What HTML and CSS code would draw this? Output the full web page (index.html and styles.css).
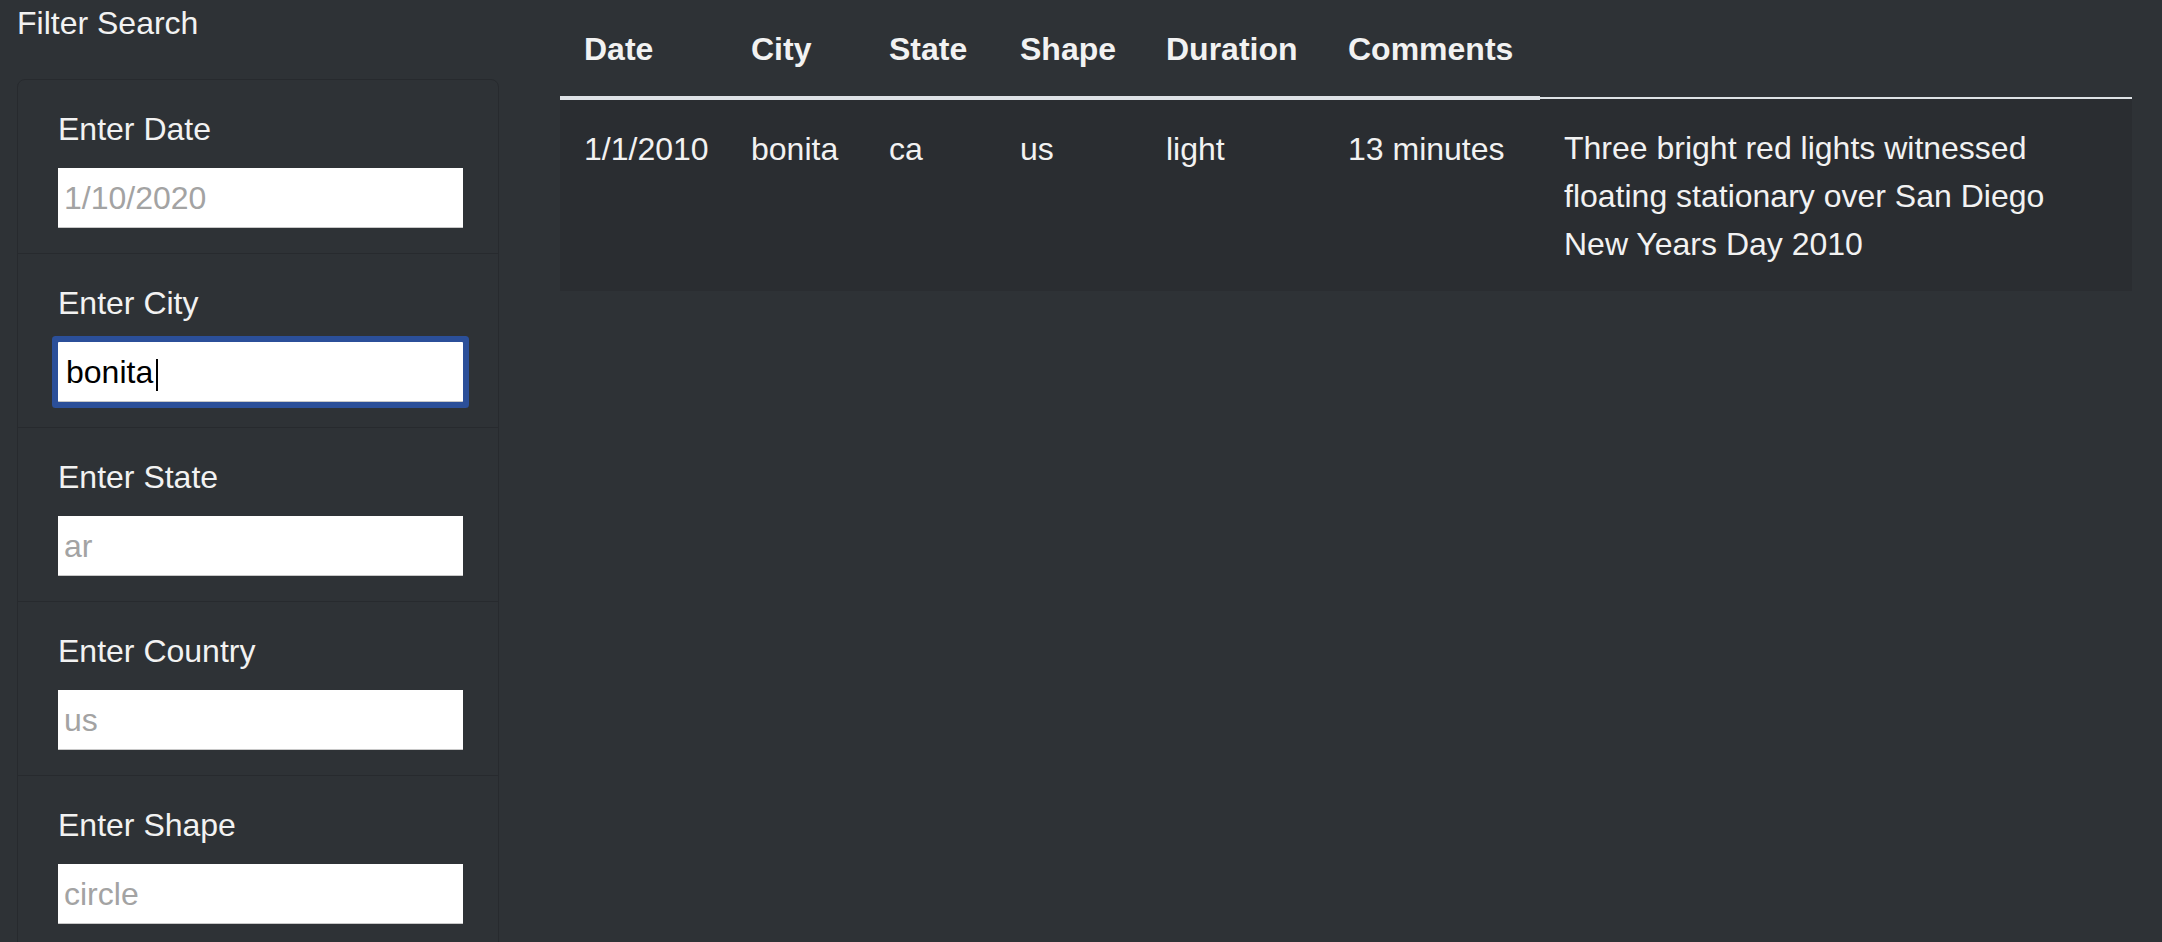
FILE: index.html
```html
<!DOCTYPE html>
<html lang="en">
<head>
<meta charset="utf-8">
<title>UFO Sightings</title>
<link rel="stylesheet" href="styles.css">
</head>
<body>
<div class="layout">
  <aside class="sidebar">
    <h2 class="sidebar-title">Filter Search</h2>
    <ul class="filters">
      <li class="filter">
        <label class="filter-label" for="datetime">Enter Date</label>
        <input class="filter-input" id="datetime" type="text" placeholder="1/10/2020">
      </li>
      <li class="filter">
        <label class="filter-label" for="city">Enter City</label>
        <div class="input-wrap">
          <input class="filter-input is-focused" id="city" type="text" value="bonita">
          <span class="caret"></span>
        </div>
      </li>
      <li class="filter">
        <label class="filter-label" for="state">Enter State</label>
        <input class="filter-input" id="state" type="text" placeholder="ar">
      </li>
      <li class="filter">
        <label class="filter-label" for="country">Enter Country</label>
        <input class="filter-input" id="country" type="text" placeholder="us">
      </li>
      <li class="filter">
        <label class="filter-label" for="shape">Enter Shape</label>
        <input class="filter-input" id="shape" type="text" placeholder="circle">
      </li>
    </ul>
  </aside>
  <main class="content">
    <table class="ufo-table">
      <colgroup>
        <col class="col-date">
        <col class="col-city">
        <col class="col-state">
        <col class="col-shape">
        <col class="col-duration">
        <col class="col-comments">
        <col class="col-extra">
      </colgroup>
      <thead>
        <tr>
          <th>Date</th>
          <th>City</th>
          <th>State</th>
          <th>Shape</th>
          <th>Duration</th>
          <th>Comments</th>
        </tr>
      </thead>
      <tbody>
        <tr>
          <td>1/1/2010</td>
          <td>bonita</td>
          <td>ca</td>
          <td>us</td>
          <td>light</td>
          <td>13 minutes</td>
          <td>Three bright red lights witnessed floating stationary over San Diego New Years Day 2010</td>
        </tr>
      </tbody>
    </table>
  </main>
</div>
</body>
</html>
```
FILE: styles.css
```css
html, body {
  margin: 0;
  padding: 0;
  height: 100%;
  overflow: hidden;
}

body {
  background: #2e3236;
  color: #f2f2f2;
  font-family: "Liberation Sans", Arial, sans-serif;
  font-size: 32px;
  line-height: 48px;
}

.layout {
  display: grid;
  grid-template-columns: 560px 1fr;
}

.sidebar {
  padding-left: 17px;
}

.sidebar-title {
  margin: 0;
  padding-top: 1px;
  font-size: 32px;
  font-weight: 400;
  line-height: 44px;
}

.filters {
  list-style: none;
  margin: 34px 0 0;
  padding: 0;
  width: 482px;
  box-sizing: border-box;
  border: 1px solid #272a2e;
  border-radius: 8px;
}

.filter {
  padding: 24px 40px 25px;
  border-top: 1px solid #272a2e;
}

.filter:first-child {
  border-top: 0;
}

.filter-label {
  display: block;
  padding-top: 1px;
  margin-bottom: 15px;
  color: #f2f2f2;
}

.input-wrap {
  position: relative;
  width: 405px;
}

.filter-input {
  display: block;
  box-sizing: border-box;
  width: 405px;
  height: 60px;
  margin: 0;
  padding: 2px 6px 0;
  border: 0;
  border-bottom: 1px solid #c8c8c8;
  border-radius: 0;
  background: #ffffff;
  color: #000000;
  font-family: "Liberation Sans", Arial, sans-serif;
  font-size: 32px;
  outline: none;
}

.filter-input::placeholder {
  color: #a3a3a3;
  opacity: 1;
}

.filter-input.is-focused {
  border-radius: 1px;
  box-shadow: 0 0 0 6px #2b4f99;
  caret-color: transparent;
  padding-left: 8px;
}

.caret {
  position: absolute;
  left: 98px;
  top: 17px;
  width: 2px;
  height: 32px;
  background: #000000;
}

.content {
  padding-right: 30px;
}

.ufo-table {
  width: 1572px;
  table-layout: fixed;
  border-collapse: collapse;
  color: #f2f2f2;
}

.col-date { width: 167px; }
.col-city { width: 138px; }
.col-state { width: 131px; }
.col-shape { width: 146px; }
.col-duration { width: 182px; }
.col-comments { width: 216px; }
.col-extra { width: 592px; }

.ufo-table th,
.ufo-table td {
  padding: 25px 24px 23px;
  text-align: left;
  vertical-align: top;
  line-height: 48px;
}

.ufo-table th {
  font-weight: 700;
  border-bottom: 4px solid #dee2e6;
}

.ufo-table td {
  border-top: 2px solid #dee2e6;
  background: #2a2d31;
}
```
